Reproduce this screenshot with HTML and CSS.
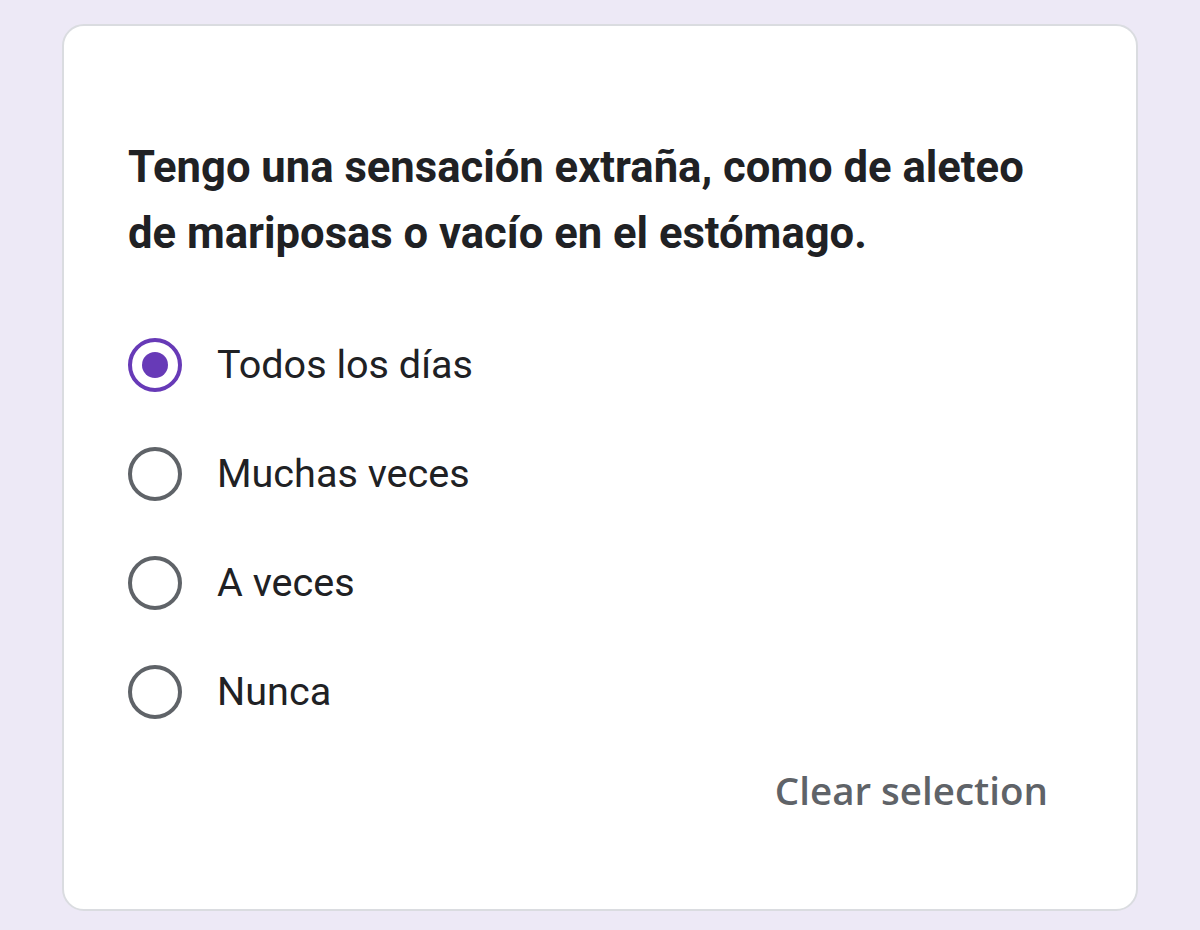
FILE: index.html
```html
<!DOCTYPE html>
<html lang="es">
<head>
<meta charset="utf-8">
<link rel="stylesheet" href="styles.css">
</head>
<body>
<div class="card">
  <h1 class="question">Tengo una sensación extraña, como de aleteo de mariposas o vacío en el estómago.</h1>
  <div class="options">
    <label class="option"><span class="radio checked"><span class="dot"></span></span><span class="label">Todos los días</span></label>
    <label class="option"><span class="radio"></span><span class="label">Muchas veces</span></label>
    <label class="option"><span class="radio"></span><span class="label">A veces</span></label>
    <label class="option"><span class="radio"></span><span class="label">Nunca</span></label>
  </div>
  <div class="footer"><span class="clear">Clear selection</span></div>
</div>
</body>
</html>
```
FILE: styles.css
```css
html, body {
  margin: 0;
  padding: 0;
  background: #ede9f6;
}
body {
  padding: 24px 62px 0 62px;
  font-family: Roboto, "Noto Sans", sans-serif;
}
.card {
  background: #fff;
  border: 2px solid #dadce0;
  border-radius: 22px;
  height: 887px;
  box-sizing: border-box;
  padding: 109px 64px 0 64px;
}
.question {
  margin: 0;
  font-size: 43.6px;
  font-weight: 700;
  line-height: 66px;
  color: #202124;
  max-width: 920px;
}
.options {
  margin-top: 43px;
  display: flex;
  flex-direction: column;
}
.option {
  display: flex;
  align-items: center;
  height: 109px;
}
.radio {
  width: 54px;
  height: 54px;
  box-sizing: border-box;
  border: 4.5px solid #5f6368;
  border-radius: 50%;
  display: flex;
  align-items: center;
  justify-content: center;
  flex: none;
}
.radio.checked {
  border-color: #673ab7;
}
.dot {
  width: 26px;
  height: 26px;
  border-radius: 50%;
  background: #673ab7;
}
.label {
  margin-left: 35px;
  font-size: 39.6px;
  color: #202124;
}
.footer {
  display: flex;
  justify-content: flex-end;
  padding-right: 24px;
  margin-top: 14px;
}
.clear {
  font-family: "Open Sans", Roboto, sans-serif;
  font-size: 38.5px;
  font-weight: 600;
  color: #5f6368;
  line-height: 60px;
}
```
